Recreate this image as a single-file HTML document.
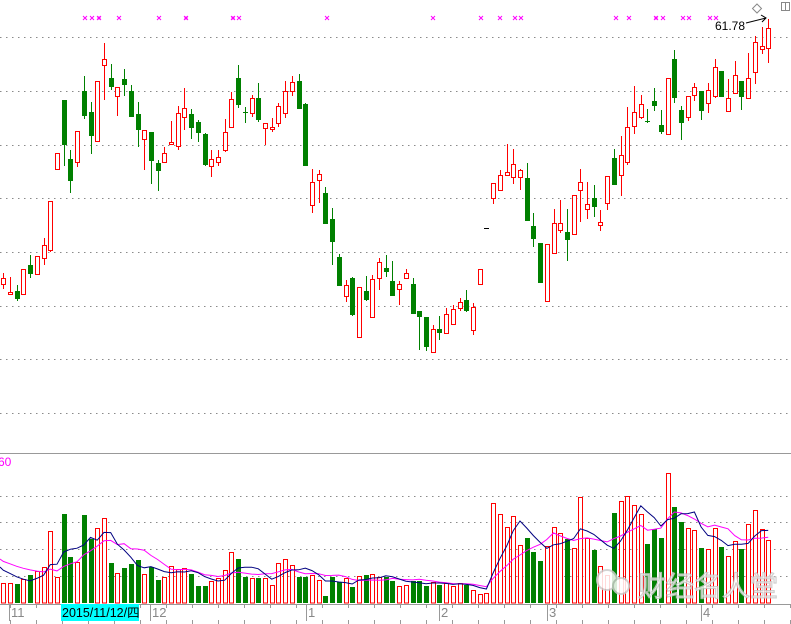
<!DOCTYPE html>
<html><head><meta charset="utf-8">
<style>
html,body{margin:0;padding:0;background:#fff;}
svg{display:block;font-family:"Liberation Sans","Noto Sans CJK SC",sans-serif;}
</style></head>
<body>
<svg id="c" width="791" height="624" viewBox="0 0 791 624" xmlns="http://www.w3.org/2000/svg">
<rect width="791" height="624" fill="#fff"/>
<g id="grid" stroke="#8a8a8a" stroke-width="1" stroke-dasharray="1.5,4.5">
<line x1="0" x2="791" y1="37.5" y2="37.5"/><line x1="0" x2="791" y1="91.5" y2="91.5"/>
<line x1="0" x2="791" y1="145.5" y2="145.5"/><line x1="0" x2="791" y1="198.5" y2="198.5"/>
<line x1="0" x2="791" y1="252.5" y2="252.5"/><line x1="0" x2="791" y1="306.5" y2="306.5"/>
<line x1="0" x2="791" y1="359.5" y2="359.5"/><line x1="0" x2="791" y1="413.5" y2="413.5"/>
<line x1="0" x2="791" y1="496.5" y2="496.5"/><line x1="0" x2="791" y1="522.5" y2="522.5"/>
<line x1="0" x2="791" y1="549.5" y2="549.5"/><line x1="0" x2="791" y1="576.5" y2="576.5"/>
</g>
<line x1="0" x2="791" y1="453.5" y2="453.5" stroke="#999"/>
<line x1="0" x2="791" y1="604.5" y2="604.5" stroke="#999"/>
<text x="-2" y="466" font-size="12" fill="#ff00ff">60</text>
<g id="cand" shape-rendering="crispEdges"></g>
<g id="vol" shape-rendering="crispEdges"></g>
<g id="ma"></g>
<!-- watermark -->
<g opacity="0.85">
<circle cx="607" cy="580" r="10" fill="#fff" stroke="#ccc" stroke-width="2"/>
<circle cx="621" cy="586" r="8" fill="#fff" stroke="#ccc" stroke-width="2"/>
<text x="638" y="596" font-size="28" fill="#fff" stroke="#c8c8c8" stroke-width="1.2">财经名人堂</text>
</g>
<g id="marks" fill="none" stroke="#ff00ff" stroke-width="1"></g>
<!-- top right -->
<text x="715" y="30" font-size="12" fill="#000">61.78</text>
<path d="M746 23 L766 18 M761 15 L766 18 L762 22" stroke="#000" fill="none" stroke-width="1"/>
<path d="M757 4 L761.5 8.5 L757 13 L752.5 8.5 Z" fill="none" stroke="#888"/>
<rect x="781.5" y="2.5" width="8" height="8" fill="none" stroke="#888"/>
<line x1="785.5" y1="2.5" x2="785.5" y2="10.5" stroke="#888"/>
<!-- x axis -->
<g stroke="#999">
<line x1="9.5" y1="604" x2="9.5" y2="621"/>
<line x1="150.5" y1="604" x2="150.5" y2="621"/>
<line x1="306.5" y1="604" x2="306.5" y2="621"/>
<line x1="439.5" y1="604" x2="439.5" y2="621"/>
<line x1="547.5" y1="604" x2="547.5" y2="621"/>
<line x1="701.5" y1="604" x2="701.5" y2="621"/>
</g>
<g id="ticks" stroke="#999"></g>
<text x="11" y="617" font-size="13" fill="#888">11</text>
<rect x="61" y="604" width="78" height="17" fill="#00ffff"/>
<text x="62" y="617" font-size="12.5" fill="#000">2015/11/12/四</text>
<text x="152" y="617" font-size="13" fill="#888">12</text>
<text x="308" y="617" font-size="13" fill="#888">1</text>
<text x="441" y="617" font-size="13" fill="#888">2</text>
<text x="549" y="617" font-size="13" fill="#888">3</text>
<text x="703" y="617" font-size="13" fill="#888">4</text>
</svg>
<script>
(function(){
var C=[
['r',278,284,273,289],['r',292,294,277,294],['g',291,299,285,301],['r',269,294,269,294],['g',265,274,255,278],
['r',256,274,256,274],['r',245,258,238,265],['r',201,250,201,252],['r',153,169,153,169],['g',100,145,100,166],
['g',159,181,150,193],['r',131,162,131,167],['g',91,116,76,119],['g',112,136,102,154],['r',81,141,81,141],
['r',59,65,43,100],['g',78,87,64,90],['r',87,96,87,116],['g',79,85,69,96],['g',91,117,85,117],
['g',114,130,102,147],['r',130,139,130,170],['g',132,161,132,184],['g',163,171,160,191],['r',153,162,147,162],
['r',142,144,121,145],['r',113,146,106,150],['r',108,117,88,130],['g',114,128,109,139],['g',122,133,120,142],
['g',134,165,133,166],['r',159,166,150,177],['r',157,162,150,166],['r',132,150,119,152],['r',99,127,92,127],
['g',78,105,65,108],['g',112,113,107,123],['r',98,113,95,117],['g',98,120,83,122],['r',123,128,123,145],
['r',127,129,118,132],['r',106,123,103,127],['r',91,113,81,118],['r',82,91,76,96],['g',81,109,74,109],
['g',104,166,103,166],['r',182,205,169,213],['r',174,180,170,203],['g',193,224,187,224],['g',219,242,208,265],
['g',257,286,254,286],['r',285,296,280,302],['g',278,315,277,316],['r',287,337,287,338],['g',291,300,276,301],
['r',279,317,275,317],['r',262,278,258,290],['g',268,272,255,277],['g',281,296,261,296],['r',284,289,281,305],
['r',273,278,269,278],['g',284,314,278,314],['g',311,317,311,350],['g',317,347,317,351],['r',329,352,325,353],
['g',329,333,316,340],['r',314,333,308,333],['r',309,324,305,324],['r',302,308,298,311],['g',300,311,290,312],
['r',307,330,303,335],['r',269,284,269,284],['k',228,228,228,228],['r',183,198,183,204],['r',175,190,170,190],
['r',172,175,144,176],['r',164,177,149,184],['r',170,177,169,190],['g',178,221,163,221],['g',226,239,213,247],
['g',243,283,243,283],['r',244,301,244,301],['r',223,253,209,253],['r',223,230,200,233],['g',232,240,209,261],
['r',195,234,195,234],['r',182,190,169,222],['r',204,209,182,219],['g',198,207,185,217],['r',222,225,210,231],
['r',176,203,176,210],['g',158,185,149,185],['r',155,175,136,196],['r',127,162,107,165],['r',112,126,86,134],
['r',104,117,95,119],['g',121,122,109,123],['g',101,106,88,111],['g',125,132,110,134],['r',78,134,78,134],
['g',59,98,50,103],['g',110,123,106,140],['r',96,117,96,121],['r',87,95,83,101],['g',91,111,91,120],
['r',90,103,83,113],['r',67,96,59,98],['g',71,97,71,97],['r',98,111,79,111],['r',75,93,61,93],
['g',81,97,81,110],['r',78,98,53,98],['r',42,72,36,84],['r',46,49,27,54],['r',28,48,19,63]];
var V=[583,583,584,579,575,571,567,531,577,514,557,562,515,539,528,518,563,573,568,564,560,574,567,580,577,566,569,568,574,586,
586,581,578,570,552,559,577,578,578,578,585,563,559,565,
577,577,575,580,596,577,582,578,587,576,575,574,577,577,581,586,
585,581,581,586,582,585,583,586,583,585,590,594,593,503,514,527,516,545,538,552,561,546,527,533,539,548,497,538,550,566,575,513,501,496,505,514,544,529,538,473,507,522,528,530,548,549,528,547,556,541,549,524,510,529,540];
var NS="http://www.w3.org/2000/svg";
function el(p,t,a){var e=document.createElementNS(NS,t);for(var k in a)e.setAttribute(k,a[k]);p.appendChild(e);return e;}
var gc=document.getElementById('cand'),gv=document.getElementById('vol'),gm=document.getElementById('ma');
var RED='#ff0000',GRN='#008000',BASE=603;
function X(i){return 3.3+6.71*i;}
for(var i=0;i<C.length;i++){
 var d=C[i],x=Math.round(X(i)),c=d[0];
 if(c=='k'){el(gc,'line',{x1:x-2,x2:x+3,y1:d[1]+.5,y2:d[1]+.5,stroke:'#000'});}
 else if(c=='r'){
  if(d[3]<d[1])el(gc,'line',{x1:x+.5,x2:x+.5,y1:d[3],y2:d[1],stroke:RED});
  if(d[4]>d[2])el(gc,'line',{x1:x+.5,x2:x+.5,y1:d[2],y2:d[4],stroke:RED});
  el(gc,'rect',{x:x-1.5,y:d[1]+.5,width:4,height:Math.max(1,d[2]-d[1]),fill:'#fff',stroke:RED});
 } else {
  el(gc,'line',{x1:x+.5,x2:x+.5,y1:d[3],y2:d[4],stroke:GRN});
  el(gc,'rect',{x:x-2,y:d[1],width:5,height:Math.max(1,d[2]-d[1]),fill:GRN});
 }
 var vt=V[i];
 if(c=='g')el(gv,'rect',{x:x-2,y:vt,width:5,height:BASE-vt,fill:GRN});
 else el(gv,'rect',{x:x-1.5,y:vt+.5,width:4,height:BASE-vt-.5,fill:'#fff',stroke:RED});
}
function ma(n,pad,col){
 var h=[];for(var k=0;k<n;k++)h.push(pad);
 for(var i=0;i<V.length;i++)h.push(BASE-V[i]);
 var pts=[];
 pts.push('0,'+(BASE-pad).toFixed(1));
 for(var i=0;i<V.length;i++){var s=0;for(var k=0;k<n;k++)s+=h[i+n-k];pts.push(X(i).toFixed(1)+','+(BASE-s/n).toFixed(1));}
 el(gm,'polyline',{points:pts.join(' '),fill:'none',stroke:col,'stroke-width':1});
}
ma(10,44,'#ff00ff');ma(5,36,'#000080');
var gk=document.getElementById('marks');
var mk=[85,92,99,119,159,186,233,239,327,433,481,500,515,521,616,629,656,663,683,689,710,716];
var big=[99,186,233,656];
mk.forEach(function(x){
 el(gk,'path',{d:'M'+(x-2)+' 16 L'+(x+2)+' 20 M'+(x+2)+' 16 L'+(x-2)+' 20'});
 if(big.indexOf(x)>=0)el(gk,'rect',{x:x-1.5,y:16.5,width:3,height:3,fill:'#ff00ff',stroke:'none'});
});
var gt=document.getElementById('ticks');
for(var t=10;t<791;t+=26){el(gt,'line',{x1:t+.5,x2:t+.5,y1:604,y2:608});el(gt,'line',{x1:t+.5,x2:t+.5,y1:620,y2:624});}
})();
</script>
</body></html>
